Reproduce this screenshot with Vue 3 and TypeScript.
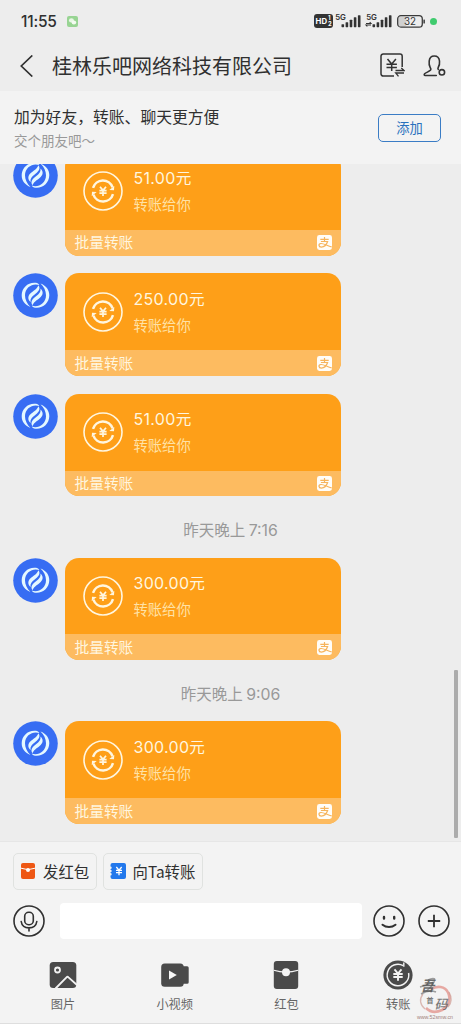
<script setup lang="ts">
interface Transfer {
  id: number
  amount: string
  time?: string
}

const transfers: Transfer[] = [
  { id: 1, amount: '51.00' },
  { id: 2, amount: '250.00' },
  { id: 3, amount: '51.00' },
  { id: 4, amount: '300.00', time: '7:16' },
  { id: 5, amount: '300.00', time: '9:06' },
]

const bars: number[] = [3, 5, 7.5, 10, 12]
</script>

<template>
  <div class="phone">
    <div class="status">
      <span class="clock">11:55</span>
      <svg class="wechat" width="11" height="11" viewBox="0 0 11 11">
        <rect width="11" height="11" rx="2" fill="#98d493" />
        <ellipse cx="4.4" cy="4.4" rx="2.5" ry="2.1" fill="#e9f8e6" />
        <ellipse cx="6.9" cy="6.5" rx="2.3" ry="1.9" fill="#f4fbf2" />
      </svg>
      <div class="signals">
        <svg width="19" height="14" viewBox="0 0 19 14">
          <rect width="19" height="14" rx="3" fill="#333" />
          <text x="1.6" y="10" class="hd">HD</text>
          <text x="14" y="6.4" class="hd-n">1</text>
          <text x="14" y="12.2" class="hd-n">2</text>
        </svg>
        <svg v-for="n in 2" :key="n" class="bars" width="27" height="16" viewBox="0 -2 27 16">
          <text x=".2" y="5.600" class="five-g">5G</text>
          <path v-if="n === 2" d="M0 9.5h5L3.7 8M5 11H0l1.3 1.5" fill="none" stroke="#333" stroke-width="1.1" />
          <rect
            v-for="(h, i) in bars" :key="i"
            :x="6.5 + i * 4.1" :y="13.2 - h" width="2.6" :height="h" rx=".6" fill="#333"
          />
        </svg>
        <svg class="battery" width="29" height="13" viewBox="0 0 29 13">
          <rect x="1.5" y="1.5" width="8" height="10" rx="2" fill="#d0d0d0" />
          <rect x=".7" y=".7" width="24.6" height="11.4" rx="3.2" fill="none" stroke="#3a3a3a" stroke-width="1.3" />
          <rect x="26.4" y="4.4" width="1.5" height="4" rx=".5" fill="#3a3a3a" />
          <text x="13" y="9.9" text-anchor="middle" class="pct">32</text>
        </svg>
        <i class="dot"></i>
      </div>
    </div>

    <header class="header">
      <svg class="back" width="14" height="22" viewBox="0 0 14 22">
        <path d="M13.300 .5 2.300 11l11 10.500" fill="none" stroke="#303030" stroke-width="1.7" />
      </svg>
      <h1>桂林乐吧网络科技有限公司</h1>
      <svg class="bill" width="25" height="25" viewBox="0 0 25 25">
        <g fill="none" stroke="#333" stroke-width="1.5">
          <path d="M22.200 14V3.200A2.200 2.200 0 0 0 20 1H3.200A2.200 2.200 0 0 0 1 3.200v17.600A2.200 2.200 0 0 0 3.200 23H14" />
          <path d="m7.500 6 4.200 5 4.200-5M6.500 11.200h10.400M6.500 14.600h10.400M11.700 11v7" />
          <path d="M15.500 17.500H24L21.300 15M24 20h-8.300l2.800 3.400" stroke-width="1.300" />
        </g>
      </svg>
      <svg class="person" width="23" height="23" viewBox="0 0 23 23">
        <g fill="none" stroke="#333" stroke-width="1.6" stroke-linecap="round" stroke-linejoin="round">
          <path d="M13.300 20.500H2.200c-1 0-1.300-1-.6-1.700 1.500-1.500 4.700-2.100 6-3.800.7-1 .1-1.900-.5-2.800C5.800 10.200 6 8 6.200 6.200 6.500 3 8.500 1 11.300 1s4.900 2 5.200 5c.2 2 .2 3.900-1.100 6-.5.9-.8 1.700-.1 2.500" />
          <circle cx="18.900" cy="17.300" r="2.700" />
        </g>
      </svg>
    </header>

    <section class="promo">
      <div>
        <p class="promo-title">加为好友，转账、聊天更方便</p>
        <p class="promo-sub">交个朋友吧～</p>
      </div>
      <button class="add">添加</button>
    </section>

    <main class="chat">
      <div class="list">
        <template v-for="t in transfers" :key="t.id">
          <div v-if="t.time" class="time">昨天晚上 <span>{{ t.time }}</span></div>
          <div class="row">
            <svg class="avatar" width="45" height="45" viewBox="0 0 45 45">
              <circle cx="22.500" cy="22.500" r="22.300" fill="#376df3" />
              <g v-for="a in [0, 180]" :key="a" :transform="`rotate(${a} 22.500 22.300)`" fill="#e4f8ff">
                <path d="M17.500 34C12 32 8.600 27.600 8.700 22.300 8.800 15.300 14.300 9.800 21.300 9.800c2.600 0 4.400.6 5 2.300-6-2.400-14.300 1.700-14.300 10.200 0 4.500 2.100 8.500 5.500 11.700Z" />
                <path d="M25.300 12.300c3 3-.3 7-3.600 9.200-2.800 1.900-4.600 4-4.200 7.500-3.500-3.200-2.400-6.800.9-9.400 3-2.400 6.300-4.200 6.900-7.300Z" />
              </g>
            </svg>
            <article class="card">
              <div class="card-main">
                <svg class="coin" width="40" height="40" viewBox="0 0 40 40">
                  <g fill="none" stroke="#fff6df">
                    <circle cx="20" cy="20" r="19" stroke-width="1.600" />
                    <path d="M10 16.900A10.300 10.300 0 0 1 29.600 16.400M30 23.100A10.300 10.300 0 0 1 10.400 23.600" stroke-width="2.500" />
                    <path d="m17 15.700 3 3.600 3-3.600M16.400 19.600h7.200M16.400 22.100h7.200M20 19v6" stroke-width="1.700" />
                  </g>
                  <path d="m31.300 14.900-.3 4.300-4.700-.3ZM8.700 25.100l.3-4.300 4.700.3Z" fill="#fff6df" />
                </svg>
                <div>
                  <p class="amount"><span>{{ t.amount }}</span>元</p>
                  <p class="note">转账给你</p>
                </div>
              </div>
              <footer class="card-foot">
                <span>批量转账</span>
                <svg width="15" height="15" viewBox="0 0 15 15">
                  <rect width="15" height="15" rx="2.400" fill="#fffdf8" />
                  <path d="M3.300 4.300h8.400M7.500 2v4.500M3.900 6.500h6.700C9.600 9.600 7.200 12 4.300 12.100c-2.900 0-3.100-3.300-.5-3.600 2.500-.3 5.500 1.800 11 3.500" fill="none" stroke="#f6b45c" stroke-width="1.200" />
                </svg>
              </footer>
            </article>
          </div>
        </template>
      </div>
      <i class="scroll"></i>
    </main>

    <section class="panel">
      <div class="chips">
        <div class="chip red">
          <svg width="14" height="16" viewBox="0 0 14 16">
            <rect width="14" height="16" rx="2" fill="#ee5714" />
            <path d="M0 5.200Q7 8.200 14 5.200" fill="none" stroke="#fff" stroke-width="1" />
            <circle cx="7" cy="7" r="2" fill="#fff" />
          </svg>
          <span>发红包</span>
        </div>
        <div class="chip blue">
          <svg width="16" height="16" viewBox="0 0 16 16">
            <path d="M2.500 0H14a2 2 0 0 1 2 2v12a2 2 0 0 1-2 2H2.500a2 2 0 0 1-2-2v-1.500a1.200 1.200 0 0 0 0-2.400V9.200a1.200 1.200 0 0 0 0-2.400V5.900a1.200 1.200 0 0 0 0-2.400V2a2 2 0 0 1 2-2Z" fill="#2278ec" />
            <path d="m6.300 4 2.700 3.200L11.700 4M6 7.400h6M6 9.700h6M9 7v5.200" fill="none" stroke="#fff" stroke-width="1.300" />
          </svg>
          <span>向<b>Ta</b>转账</span>
        </div>
      </div>

      <div class="compose">
        <svg width="32" height="32" viewBox="0 0 32 32">
          <g fill="none" stroke="#303030" stroke-width="1.600" stroke-linecap="round">
            <circle cx="16" cy="16" r="15" />
            <rect x="11.700" y="7.300" width="8.600" height="12.400" rx="4" />
            <path d="M8.200 16.500c.6 4 3.800 6.400 7.800 6.400s7.200-2.400 7.800-6.400M16 23v3" />
          </g>
        </svg>
        <div class="input"></div>
        <svg width="32" height="32" viewBox="0 0 32 32">
          <g fill="none" stroke="#303030" stroke-width="1.600" stroke-linecap="round">
            <circle cx="16" cy="16" r="15" />
            <path d="M11 12v1.600M21.200 12v1.600" stroke-width="2.400" />
            <path d="M9.500 19.700c3.800 3.200 9.200 3.200 13 0" stroke-width="2" />
          </g>
        </svg>
        <svg class="plus" width="32" height="32" viewBox="0 0 32 32">
          <circle cx="16" cy="16" r="15" fill="none" stroke="#303030" stroke-width="1.600" />
          <path d="M9.800 16h12.400M16 9.800v12.400" fill="none" stroke="#303030" stroke-width="1.800" />
        </svg>
      </div>

      <nav class="tools">
        <div class="tool">
          <svg width="30" height="30" viewBox="0 0 30 30">
            <rect x="1.700" y="2" width="26.600" height="26" rx="3.500" fill="#4a4a4a" />
            <circle cx="9.500" cy="10" r="2.500" fill="none" stroke="#f3f3f3" stroke-width="1.800" />
            <path d="m7.500 28.500 11-11.200q1-1 2 0l8.500 7.700" fill="none" stroke="#f3f3f3" stroke-width="1.800" />
          </svg>
          <span>图片</span>
        </div>
        <div class="tool">
          <svg width="30" height="30" viewBox="0 0 30 30">
            <rect x="1.200" y="3.500" width="22.500" height="23.300" rx="3.500" fill="#4a4a4a" />
            <path d="M22.500 6.200h4.600a1.600 1.600 0 0 1 1.600 1.600v14.400a1.600 1.600 0 0 1-1.600 1.600h-4.600Z" fill="#4a4a4a" />
            <path d="M9 10.500v9l7.800-4.500Z" fill="#f8f8f8" />
          </svg>
          <span>小视频</span>
        </div>
        <div class="tool">
          <svg width="30" height="30" viewBox="0 0 30 30">
            <rect x="2.800" y="1" width="24.400" height="28" rx="3" fill="#4a4a4a" />
            <path d="M2.800 10.300Q15 14 27.200 10.300" fill="none" stroke="#f3f3f3" stroke-width="1.200" />
            <circle cx="15" cy="12.200" r="4" fill="#f3f3f3" />
          </svg>
          <span>红包</span>
        </div>
        <div class="tool">
          <svg width="30" height="30" viewBox="0 0 30 30">
            <circle cx="15" cy="15" r="14.600" fill="#4a4a4a" />
            <g fill="none" stroke="#f3f3f3">
              <path d="M20.300 5.600A10.800 10.800 0 1 0 25.600 13" stroke-width="1.500" />
              <path d="M20.800 2.500v4.200" stroke-width="1.400" />
              <path d="m11.500 9.300 3.500 4.200 3.500-4.200M10.300 14h9.400M10.300 17h9.400M15 13.500v7.300" stroke-width="1.900" />
            </g>
          </svg>
          <span>转账</span>
        </div>
      </nav>
    </section>

    <svg class="mark" width="40" height="46" viewBox="0 0 40 46">
      <path d="M15 12.500C21 8 29 9.500 32 15.500c3.500 7 0 14.500-6 17.500-6 2.800-12 2-16-2" fill="none" stroke="#dd776d" stroke-width="2.600" opacity=".6" />
      <path d="M7 17C3 22 4 28 9 32M33 15c3 5 3 11-1 15" fill="none" stroke="#c99086" stroke-width="1.300" opacity=".6" />
      <path d="M12 3c2-1 5-2 7-1M4 10c4-1 9-3 14-5-2 5-7 9-13 12 5-3 10-4 15-2" fill="none" stroke="#555" stroke-width="1.500" opacity=".55" />
      <text x="4.500" y="13.500" class="wu">吾</text>
      <text x="10.500" y="26" class="shou">首</text>
      <text x="18.500" y="31.500" class="ma">码</text>
      <text x="1" y="42" class="url" textLength="36" lengthAdjust="spacingAndGlyphs">www.52smw.cn</text>
    </svg>
  </div>
</template>

<style>
body {
  margin: 0;
  background: #ededed;
}
</style>

<style scoped>
.phone {
  position: relative;
  width: 461px;
  height: 1024px;
  overflow: hidden;
  display: flex;
  flex-direction: column;
  background: #ededed;
  color: #303030;
  font-family: "Noto Sans CJK SC", sans-serif;
}
p, h1 { margin: 0; font-weight: 400; white-space: nowrap; }
svg { display: block; flex: none; }

.status {
  display: flex;
  align-items: center;
  height: 42px;
  padding: 0 24px 0 21px;
  box-sizing: border-box;
  flex: none;
}
.clock {
  width: 46px;
  padding-top: 1px;
  font: 500 15.5px/20px Inter, sans-serif;
  letter-spacing: -.2px;
}
.signals { display: flex; align-items: center; margin-left: auto; }
.bars { margin: -2px 0 0 2px; overflow: visible; }
.bars + .bars { margin-left: 4px; }
.hd { font: 700 7.8px Inter, sans-serif; fill: #fff; }
.hd-n { font: 700 5.8px Inter, sans-serif; fill: #fff; }
.five-g { font: 600 7.8px Inter, sans-serif; fill: #333; }
.pct { font: 400 9.8px Inter, sans-serif; fill: #333; }
.battery { margin-left: 4px; }
.dot { width: 7px; height: 7px; margin-left: 4px; border-radius: 50%; background: #3fcb6e; }

.header {
  display: flex;
  align-items: center;
  height: 49px;
  padding: 0 15px 1px 19px;
  box-sizing: border-box;
  flex: none;
}
h1 { margin-left: 19px; font-size: 20px; line-height: 30px; }
.bill { margin: -1px 18px 0 auto; }

.promo {
  display: flex;
  justify-content: space-between;
  height: 73px;
  padding: 0 20px 0 14px;
  box-sizing: border-box;
  flex: none;
  background: #f3f3f3;
}
.promo-title { margin-top: 13.500px; font-size: 15.8px; line-height: 24px; }
.promo-sub { margin-top: .5px; font-size: 13.5px; line-height: 22px; color: #999; }
.add {
  width: 63px;
  height: 28px;
  margin-top: 23px;
  padding: 0;
  border: 1px solid #3a7cc5;
  border-radius: 5px;
  background: none;
  color: #2a71bd;
  font: 400 13.3px/26px "Noto Sans CJK SC", sans-serif;
}

.chat { position: relative; height: 677px; overflow: hidden; flex: none; }
.list { margin-top: -10.9px; padding-left: 13px; }
.row { display: flex; align-items: flex-start; gap: 7px; height: 102.5px; }
.row + .row { margin-top: 17.8px; }
.card {
  width: 276px;
  height: 102.5px;
  border-radius: 14px;
  overflow: hidden;
  background: #fe9f18;
  color: #fff6df;
}
.card-main { display: flex; gap: 11px; height: 76.800px; padding: 18.300px 0 0 17.500px; box-sizing: border-box; }
.amount { margin-top: -6px; font-size: 15.6px; line-height: 24px; }
.amount span { font-family: Inter, sans-serif; font-size: 16px; letter-spacing: .3px; }
.note { margin-top: 2px; font-size: 14.3px; line-height: 24px; color: #ffe2a6; }
.card-foot {
  display: flex;
  align-items: center;
  justify-content: space-between;
  height: 25.700px;
  padding: 0 9px 0 9.500px;
  background: #fdbb60;
  font-size: 14.700px;
}
.card-foot span { line-height: 22px; margin-top: -1px; }
.time {
  height: 61.4px;
  padding: 6px 0 0;
  margin-left: -13px;
  box-sizing: border-box;
  text-align: center;
  font-size: 15.500px;
  line-height: 55.400px;
  color: #999;
}
.time span { font-family: Inter, sans-serif; font-size: 15.800px; }
.scroll {
  position: absolute;
  right: 3.5px;
  bottom: 3px;
  width: 4px;
  height: 168px;
  border-radius: 1px;
  background: #acacac;
}

.panel {
  flex: 1;
  border-top: 1px solid #e6e6e6;
  border-bottom: 1px solid #dedede;
  background: #f3f3f3;
}
.chips { display: flex; gap: 6px; padding: 11px 13px 0; }
.chip {
  display: flex;
  align-items: center;
  height: 37px;
  box-sizing: border-box;
  border: 1px solid #e0e2e0;
  border-radius: 5px;
  font-size: 15.400px;
  white-space: nowrap;
}
.chip svg { margin-top: -2px; }
.chip span { margin-top: -2px; }
.red { width: 84px; padding-left: 7px; gap: 8px; }
.blue { width: 100px; padding-left: 5.500px; gap: 7px; }
.chip b { font-weight: 400; }
.compose { display: flex; align-items: center; height: 36px; padding: 13px 11px 0 13px; }
.input { width: 302px; height: 36px; margin: 0 11px 0 15px; border-radius: 4px; background: #fff; }
.plus { margin-left: 13px; }
.tools { display: flex; margin: 21px 0 0 7px; }
.tool { width: 111.8px; display: flex; flex-direction: column; align-items: center; }
.tool span { margin-top: 5px; font-size: 12.200px; line-height: 18px; color: #666; }
.mark { position: absolute; left: 416px; top: 977px; overflow: visible; }
.wu { font: italic 700 14px "Noto Sans CJK SC", sans-serif; fill: #555; opacity: .85; }
.shou { font: 500 7px "Noto Sans CJK SC", sans-serif; fill: #666; }
.ma { font: italic 500 13px "Noto Sans CJK SC", sans-serif; fill: #666; opacity: .85; }
.url { font: 400 5.500px "Liberation Sans", sans-serif; fill: #a2817b; }
</style>
